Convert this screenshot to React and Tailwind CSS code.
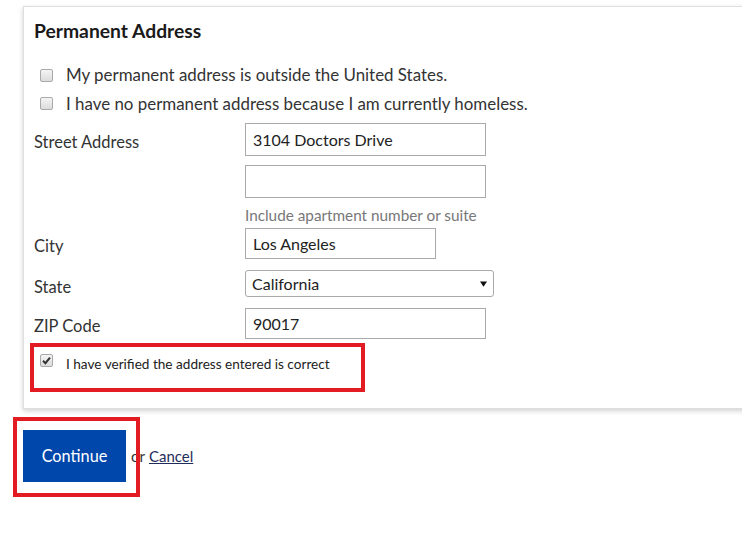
function Box({ checked = false }) {
  return (
    <span className="relative inline-block w-[13px] h-[13px] shrink-0 rounded-[2px] border border-[#a9a9a9] bg-gradient-to-b from-[#f4f4f4] to-[#dcdcdc]">
      {checked && (
        <svg viewBox="0 0 13 13" className="absolute -top-px -left-px w-[13px] h-[13px]">
          <path d="M3 6.8 L5.4 9.2 L10 3.6" fill="none" stroke="#333" strokeWidth="2" />
        </svg>
      )}
    </span>
  )
}

function Field({ label, children, className = '', pad = 'pt-[4px]' }) {
  return (
    <div className={`flex items-center ${className}`}>
      <div className={`w-[211px] shrink-0 leading-5 text-[16.5px] text-[#333] ${pad}`}>{label}</div>
      {children}
    </div>
  )
}

function TextBox({ value, w = 'w-[241px]', h = 'h-[33px]' }) {
  return (
    <div className={`${w} ${h} border border-[#a9a9a9] bg-white flex items-center px-[7px] text-[16px] text-[#222]`}>
      {value}
    </div>
  )
}

export default function App() {
  return (
    <div className="relative w-[742px] h-[534px] overflow-hidden bg-white font-['Lato','Liberation_Sans',sans-serif]">
      <div className="pl-[23px] pt-[6px]">
        <div className="w-[740px] bg-white border border-[#dedede] border-r-0 shadow-[0_2px_5px_rgba(0,0,0,0.18)] pl-[10px] pt-[12px] pb-[17px]">
          <h2 className="h-6 leading-6 text-[19.3px] font-bold text-[#1a1a1a]">Permanent Address</h2>

          <div className="mt-[18px] h-[28px] flex items-center">
            <span className="ml-[6px] mr-[13px] flex"><Box /></span>
            <span className="text-[16.9px] text-[#333]">My permanent address is outside the United States.</span>
          </div>
          <div className="h-[29px] flex items-center">
            <span className="ml-[6px] mr-[13px] flex"><Box /></span>
            <span className="text-[16.9px] text-[#333]">I have no permanent address because I am currently homeless.</span>
          </div>

          <Field label="Street Address" className="mt-[5px]">
            <TextBox value="3104 Doctors Drive" />
          </Field>
          <Field label="" className="mt-[9px]">
            <TextBox value="" />
          </Field>
          <div className="pl-[211px] mt-[7px] h-5 leading-5 text-[15.3px] text-[#777]">Include apartment number or suite</div>

          <Field label="City" className="mt-[3px]">
            <TextBox value="Los Angeles" w="w-[191px]" h="h-[31px]" />
          </Field>
          <Field label="State" className="mt-[11px]" pad="pt-[6px]">
            <div className="w-[249px] h-[27px] border border-[#a9a9a9] rounded-[3px] flex items-center justify-between pl-[6px] pr-[6px] text-[16px] text-[#222]">
              <span>California</span>
              <svg viewBox="0 0 8 6" className="w-[7px] h-[6px]"><path d="M0 0 H8 L4 6 Z" fill="#111" /></svg>
            </div>
          </Field>
          <Field label="ZIP Code" className="mt-[11px]">
            <TextBox value="90017" h="h-[31px]" />
          </Field>

          <div className="mt-[4px] h-[48px] flex items-start pt-[11px]">
            <span className="ml-[6px] mr-[13px] flex"><Box checked /></span>
            <span className="text-[13.6px] leading-[16px] mt-[2px] text-[#222]">I have verified the address entered is correct</span>
          </div>
        </div>

        <div className="mt-[21px] flex items-center">
          <button className="w-[103px] h-[52px] bg-[#0047ab] text-white text-[16.3px]">Continue</button>
          <span className="ml-[5px] text-[15px] text-[#333]">or</span>
          <a className="ml-[4px] text-[15px] text-[#1f2d5a] underline">Cancel</a>
        </div>
      </div>

      <div className="absolute left-[30px] top-[343px] w-[335px] h-[49px] border-[4px] border-[#e31b23]" />
      <div className="absolute left-[13px] top-[417px] w-[127px] h-[80px] border-[4px] border-[#e31b23]" />
    </div>
  )
}
